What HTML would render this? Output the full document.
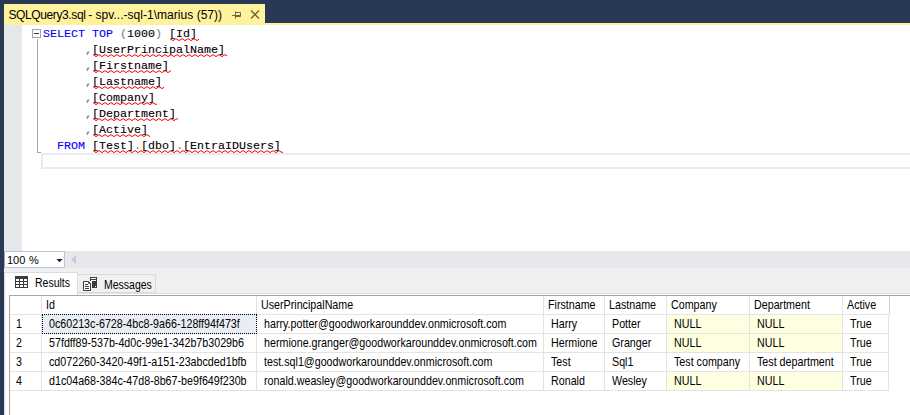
<!DOCTYPE html>
<html>
<head>
<meta charset="utf-8">
<title>SQLQuery3.sql</title>
<style>
*{margin:0;padding:0;box-sizing:border-box;}
html,body{width:910px;height:415px;overflow:hidden;background:#293955;}
body{position:relative;font-family:"Liberation Sans",sans-serif;color:#000;}
.abs{position:absolute;}
/* ---- document tab ---- */
#tab{left:4px;top:4px;width:261px;height:19px;background:#fff29d;}
#tabstrip{left:4px;top:23px;width:906px;height:2px;background:#fff29d;}
#tabtxt{left:3.5px;top:3px;font-size:12px;line-height:16px;white-space:nowrap;color:#000;}
/* ---- editor ---- */
#editor{left:4px;top:25px;width:906px;height:226px;background:#fff;}
#gutter{left:0;top:0;width:18px;height:226px;background:#e6e7e8;}
#code{left:39.0px;top:1px;font-family:"Liberation Mono",monospace;font-size:11.667px;letter-spacing:0;line-height:16px;white-space:pre;color:#000;-webkit-text-stroke:0.1px currentColor;}
#code div{height:16px;}
.k{color:#0000ff;}
.g{color:#808080;}
.gc{color:#808080;font-weight:bold;}
#curline{left:37px;top:128px;width:880px;height:16px;border:2px solid #eaeaf2;background:#fff;}
#ol-v{left:33px;top:14px;width:1px;height:114px;background:#a5a5a5;}
#ol-h{left:33px;top:127px;width:4px;height:1px;background:#a5a5a5;}
#ol-box{left:28px;top:4px;width:9px;height:9px;border:1px solid #a5a5a5;background:#fff;}
#ol-minus{left:30px;top:8px;width:5px;height:1px;background:#333;}
/* ---- zoom / scrollbar row ---- */
#hbar{left:4px;top:251px;width:906px;height:17px;background:#e8e8ec;}
#zoombox{left:0;top:0;width:61px;height:17px;background:#fff;border:1px solid #b8c4e0;border-left-color:#9aa6c8;}
#zoomtxt{left:2px;top:1px;font-size:11px;word-spacing:0.5px;line-height:15px;white-space:nowrap;}
/* ---- results area ---- */
#results{left:4px;top:268px;width:906px;height:147px;background:#f0f0f0;}
#rtab{left:0;top:4px;width:74px;height:23px;background:#fff;border:1px solid #dcdcdc;border-bottom:none;}
#mtab{left:74px;top:6px;width:78px;height:19px;background:#f0f0f0;border:1px solid #d9d9d9;border-left:none;}
.tl{font-size:12px;line-height:14px;white-space:nowrap;transform:scaleX(.875);transform-origin:0 50%;}
#pane{left:0;top:25px;width:906px;height:122px;background:#fff;border-top:1px solid #e0e0e0;border-left:1px solid #d8dce6;}
#grid{left:5px;top:27px;width:901px;height:120px;background:#fff;border-left:1px solid #a5a5a9;border-top:1px solid #a5a5a9;}
.vl{position:absolute;top:0;width:1px;background:#e3e3e3;}
.hl{position:absolute;left:0;height:1px;background:#e3e3e3;}
.c{position:absolute;height:18px;font-size:12.2px;line-height:18px;white-space:nowrap;}
.c span{display:inline-block;position:relative;top:-0.3px;transform:scaleX(.878);transform-origin:0 50%;}
.null{background:#ffffe1;}
.sel{position:absolute;background:#e9edf4;border:1px dotted #000;}
</style>
</head>
<body>
<div class="abs" id="tab"><div class="abs" id="tabtxt"><span class="abs" style="left:1px;top:0;letter-spacing:-0.39px">SQLQuery3.sql</span><span class="abs" style="left:80.7px;top:0;letter-spacing:0.03px">- spv...-sql-1\marius (57))</span></div>
<svg class="abs" style="left:228px;top:7px" width="9" height="8" viewBox="0 0 9 8"><path d="M0 4.5H3.5 M3.5 0.5V7.5 M3.5 1.5H8.5V5.5H3.5 M3.5 4.5H8.5" fill="none" stroke="#75633d" stroke-width="1"/></svg>
<svg class="abs" style="left:246px;top:6px" width="10" height="9" viewBox="0 0 10 9"><path d="M1 0.5L9 8.5M9 0.5L1 8.5" fill="none" stroke="#75633d" stroke-width="1.4"/></svg>
</div>
<div class="abs" id="tabstrip"></div>

<div class="abs" id="editor">
 <div class="abs" id="gutter"></div>
 <div class="abs" id="ol-v"></div><div class="abs" id="ol-h"></div>
 <div class="abs" id="ol-box"></div><div class="abs" id="ol-minus"></div>
 <div class="abs" id="curline"></div>
 <div class="abs" id="code"><div><span class="k">SELECT</span> <span class="k">TOP</span> <span class="g">(</span>1000<span class="g">)</span> [Id]</div><div>      <span class="gc">,</span>[UserPrincipalName]</div><div>      <span class="gc">,</span>[Firstname]</div><div>      <span class="gc">,</span>[Lastname]</div><div>      <span class="gc">,</span>[Company]</div><div>      <span class="gc">,</span>[Department]</div><div>      <span class="gc">,</span>[Active]</div><div>  <span class="k">FROM</span> [Test]<span class="g">.</span>[dbo]<span class="g">.</span>[EntraIDUsers]</div></div>
<svg class="abs" style="left:165.5px;top:13px" width="29" height="4" viewBox="0 0 29 4"><path d="M0 0.6 L3 2.6 L6 0.6 L9 2.6 L12 0.6 L15 2.6 L18 0.6 L21 2.6 L24 0.6 L27 2.6 L30 0.6" fill="none" stroke="#ff0000" stroke-width="1" stroke-linejoin="round"/></svg>
<svg class="abs" style="left:88.5px;top:29px" width="134" height="4" viewBox="0 0 134 4"><path d="M0 0.6 L3 2.6 L6 0.6 L9 2.6 L12 0.6 L15 2.6 L18 0.6 L21 2.6 L24 0.6 L27 2.6 L30 0.6 L33 2.6 L36 0.6 L39 2.6 L42 0.6 L45 2.6 L48 0.6 L51 2.6 L54 0.6 L57 2.6 L60 0.6 L63 2.6 L66 0.6 L69 2.6 L72 0.6 L75 2.6 L78 0.6 L81 2.6 L84 0.6 L87 2.6 L90 0.6 L93 2.6 L96 0.6 L99 2.6 L102 0.6 L105 2.6 L108 0.6 L111 2.6 L114 0.6 L117 2.6 L120 0.6 L123 2.6 L126 0.6 L129 2.6 L132 0.6 L135 2.6" fill="none" stroke="#ff0000" stroke-width="1" stroke-linejoin="round"/></svg>
<svg class="abs" style="left:88.5px;top:45px" width="78" height="4" viewBox="0 0 78 4"><path d="M0 0.6 L3 2.6 L6 0.6 L9 2.6 L12 0.6 L15 2.6 L18 0.6 L21 2.6 L24 0.6 L27 2.6 L30 0.6 L33 2.6 L36 0.6 L39 2.6 L42 0.6 L45 2.6 L48 0.6 L51 2.6 L54 0.6 L57 2.6 L60 0.6 L63 2.6 L66 0.6 L69 2.6 L72 0.6 L75 2.6 L78 0.6 L81 2.6" fill="none" stroke="#ff0000" stroke-width="1" stroke-linejoin="round"/></svg>
<svg class="abs" style="left:88.5px;top:61px" width="71" height="4" viewBox="0 0 71 4"><path d="M0 0.6 L3 2.6 L6 0.6 L9 2.6 L12 0.6 L15 2.6 L18 0.6 L21 2.6 L24 0.6 L27 2.6 L30 0.6 L33 2.6 L36 0.6 L39 2.6 L42 0.6 L45 2.6 L48 0.6 L51 2.6 L54 0.6 L57 2.6 L60 0.6 L63 2.6 L66 0.6 L69 2.6 L72 0.6" fill="none" stroke="#ff0000" stroke-width="1" stroke-linejoin="round"/></svg>
<svg class="abs" style="left:88.5px;top:77px" width="64" height="4" viewBox="0 0 64 4"><path d="M0 0.6 L3 2.6 L6 0.6 L9 2.6 L12 0.6 L15 2.6 L18 0.6 L21 2.6 L24 0.6 L27 2.6 L30 0.6 L33 2.6 L36 0.6 L39 2.6 L42 0.6 L45 2.6 L48 0.6 L51 2.6 L54 0.6 L57 2.6 L60 0.6 L63 2.6 L66 0.6" fill="none" stroke="#ff0000" stroke-width="1" stroke-linejoin="round"/></svg>
<svg class="abs" style="left:88.5px;top:93px" width="85" height="4" viewBox="0 0 85 4"><path d="M0 0.6 L3 2.6 L6 0.6 L9 2.6 L12 0.6 L15 2.6 L18 0.6 L21 2.6 L24 0.6 L27 2.6 L30 0.6 L33 2.6 L36 0.6 L39 2.6 L42 0.6 L45 2.6 L48 0.6 L51 2.6 L54 0.6 L57 2.6 L60 0.6 L63 2.6 L66 0.6 L69 2.6 L72 0.6 L75 2.6 L78 0.6 L81 2.6 L84 0.6 L87 2.6" fill="none" stroke="#ff0000" stroke-width="1" stroke-linejoin="round"/></svg>
<svg class="abs" style="left:88.5px;top:109px" width="57" height="4" viewBox="0 0 57 4"><path d="M0 0.6 L3 2.6 L6 0.6 L9 2.6 L12 0.6 L15 2.6 L18 0.6 L21 2.6 L24 0.6 L27 2.6 L30 0.6 L33 2.6 L36 0.6 L39 2.6 L42 0.6 L45 2.6 L48 0.6 L51 2.6 L54 0.6 L57 2.6 L60 0.6" fill="none" stroke="#ff0000" stroke-width="1" stroke-linejoin="round"/></svg>
<svg class="abs" style="left:88.5px;top:125px" width="190" height="4" viewBox="0 0 190 4"><path d="M0 0.6 L3 2.6 L6 0.6 L9 2.6 L12 0.6 L15 2.6 L18 0.6 L21 2.6 L24 0.6 L27 2.6 L30 0.6 L33 2.6 L36 0.6 L39 2.6 L42 0.6 L45 2.6 L48 0.6 L51 2.6 L54 0.6 L57 2.6 L60 0.6 L63 2.6 L66 0.6 L69 2.6 L72 0.6 L75 2.6 L78 0.6 L81 2.6 L84 0.6 L87 2.6 L90 0.6 L93 2.6 L96 0.6 L99 2.6 L102 0.6 L105 2.6 L108 0.6 L111 2.6 L114 0.6 L117 2.6 L120 0.6 L123 2.6 L126 0.6 L129 2.6 L132 0.6 L135 2.6 L138 0.6 L141 2.6 L144 0.6 L147 2.6 L150 0.6 L153 2.6 L156 0.6 L159 2.6 L162 0.6 L165 2.6 L168 0.6 L171 2.6 L174 0.6 L177 2.6 L180 0.6 L183 2.6 L186 0.6 L189 2.6 L192 0.6" fill="none" stroke="#ff0000" stroke-width="1" stroke-linejoin="round"/></svg>
</div>

<div class="abs" id="hbar">
 <div class="abs" id="zoombox"><div class="abs" id="zoomtxt">100 %</div>
  <svg class="abs" style="left:50.5px;top:7px" width="7" height="4" viewBox="0 0 7 4"><path d="M0.3 0H6.7L3.5 3.2Z" fill="#1b2035"/></svg>
 </div>
 <svg class="abs" style="left:67px;top:4px" width="5" height="9" viewBox="0 0 5 9"><path d="M5 0V9L0 4.5Z" fill="#c8c9d2"/></svg>
</div>

<div class="abs" id="results">
 <div class="abs" id="pane"></div>
 <div class="abs" id="rtab">
  <svg class="abs" style="left:10px;top:3px" width="13" height="12" viewBox="0 0 13 12"><rect x="0" y="0" width="13" height="12" fill="#3b3b3b"/><rect x="1" y="3" width="3" height="2" fill="#fff"/><rect x="5" y="3" width="3" height="2" fill="#fff"/><rect x="9" y="3" width="3" height="2" fill="#fff"/><rect x="1" y="6" width="3" height="2" fill="#fff"/><rect x="5" y="6" width="3" height="2" fill="#fff"/><rect x="9" y="6" width="3" height="2" fill="#fff"/><rect x="1" y="9" width="3" height="2" fill="#fff"/><rect x="5" y="9" width="3" height="2" fill="#fff"/><rect x="9" y="9" width="3" height="2" fill="#fff"/></svg>
  <div class="abs tl" style="left:30.2px;top:2.65px">Results</div>
 </div>
 <div class="abs" id="mtab">
  <svg class="abs" style="left:4px;top:2px" width="16" height="14" viewBox="0 0 16 14"><rect x="8" y="0" width="7" height="11" fill="#3b3b3b"/><rect x="9" y="1" width="5" height="1" fill="#fff"/><rect x="9" y="3" width="5" height="1" fill="#fff"/><rect x="13" y="9" width="1" height="1" fill="#fff"/><rect x="8" y="4" width="2" height="7" fill="#f4f4f4"/><path d="M1.5 4.5H6.5L8.5 6.5V13.5H1.5Z" fill="#fff" stroke="#3b3b3b"/><path d="M6.5 4.5V6.5H8.5" fill="none" stroke="#3b3b3b" stroke-width="0.8"/><path d="M3 7.5H6M3 9.5H7M3 11.5H7" stroke="#3b3b3b"/></svg>
  <div class="abs tl" style="left:25.6px;top:2.65px">Messages</div>
 </div>
 <div class="abs" id="grid">
<div class="vl" style="left:31px;height:95px"></div>
<div class="vl" style="left:246px;height:95px"></div>
<div class="vl" style="left:533px;height:95px"></div>
<div class="vl" style="left:594px;height:95px"></div>
<div class="vl" style="left:656px;height:95px"></div>
<div class="vl" style="left:739px;height:95px"></div>
<div class="vl" style="left:832px;height:95px"></div>
<div class="vl" style="left:879px;height:18px;background:#d0d0d0"></div>
<div class="vl" style="left:878px;top:18px;height:77px"></div>
<div class="hl" style="top:18px;width:879px"></div>
<div class="hl" style="top:37px;width:879px"></div>
<div class="hl" style="top:56px;width:879px"></div>
<div class="hl" style="top:75px;width:879px"></div>
<div class="hl" style="top:94px;width:879px"></div>
<div class="c" style="left:36px;top:0px"><span>Id</span></div>
<div class="c" style="left:251px;top:0px"><span>UserPrincipalName</span></div>
<div class="c" style="left:538px;top:0px"><span>Firstname</span></div>
<div class="c" style="left:599px;top:0px"><span>Lastname</span></div>
<div class="c" style="left:661px;top:0px"><span>Company</span></div>
<div class="c" style="left:744px;top:0px"><span>Department</span></div>
<div class="c" style="left:837px;top:0px"><span>Active</span></div>
<div class="c" style="left:6px;top:19px"><span>1</span></div>
<div class="sel" style="left:32px;top:18px;width:215px;height:20px"></div>
<div class="c" style="left:32px;top:19px;width:214px;padding-left:7.2px"><span>0c60213c-6728-4bc8-9a66-128ff94f473f</span></div>
<div class="c" style="left:247px;top:19px;width:286px;padding-left:6.5px"><span>harry.potter@goodworkarounddev.onmicrosoft.com</span></div>
<div class="c" style="left:534px;top:19px;width:60px;padding-left:6.5px"><span>Harry</span></div>
<div class="c" style="left:595px;top:19px;width:61px;padding-left:6.5px"><span>Potter</span></div>
<div class="c null" style="left:657px;top:19px;width:82px;padding-left:6.5px"><span>NULL</span></div>
<div class="c null" style="left:740px;top:19px;width:92px;padding-left:6.5px"><span>NULL</span></div>
<div class="c" style="left:833px;top:19px;width:46px;padding-left:6.5px"><span>True</span></div>
<div class="c" style="left:6px;top:38px"><span>2</span></div>
<div class="c" style="left:32px;top:38px;width:214px;padding-left:7.2px"><span>57fdff89-537b-4d0c-99e1-342b7b3029b6</span></div>
<div class="c" style="left:247px;top:38px;width:286px;padding-left:6.5px"><span>hermione.granger@goodworkarounddev.onmicrosoft.com</span></div>
<div class="c" style="left:534px;top:38px;width:60px;padding-left:6.5px"><span>Hermione</span></div>
<div class="c" style="left:595px;top:38px;width:61px;padding-left:6.5px"><span>Granger</span></div>
<div class="c null" style="left:657px;top:38px;width:82px;padding-left:6.5px"><span>NULL</span></div>
<div class="c null" style="left:740px;top:38px;width:92px;padding-left:6.5px"><span>NULL</span></div>
<div class="c" style="left:833px;top:38px;width:46px;padding-left:6.5px"><span>True</span></div>
<div class="c" style="left:6px;top:57px"><span>3</span></div>
<div class="c" style="left:32px;top:57px;width:214px;padding-left:7.2px"><span>cd072260-3420-49f1-a151-23abcded1bfb</span></div>
<div class="c" style="left:247px;top:57px;width:286px;padding-left:6.5px"><span>test.sql1@goodworkarounddev.onmicrosoft.com</span></div>
<div class="c" style="left:534px;top:57px;width:60px;padding-left:6.5px"><span>Test</span></div>
<div class="c" style="left:595px;top:57px;width:61px;padding-left:6.5px"><span>Sql1</span></div>
<div class="c" style="left:657px;top:57px;width:82px;padding-left:6.5px"><span>Test company</span></div>
<div class="c" style="left:740px;top:57px;width:92px;padding-left:6.5px"><span>Test department</span></div>
<div class="c" style="left:833px;top:57px;width:46px;padding-left:6.5px"><span>True</span></div>
<div class="c" style="left:6px;top:76px"><span>4</span></div>
<div class="c" style="left:32px;top:76px;width:214px;padding-left:7.2px"><span>d1c04a68-384c-47d8-8b67-be9f649f230b</span></div>
<div class="c" style="left:247px;top:76px;width:286px;padding-left:6.5px"><span>ronald.weasley@goodworkarounddev.onmicrosoft.com</span></div>
<div class="c" style="left:534px;top:76px;width:60px;padding-left:6.5px"><span>Ronald</span></div>
<div class="c" style="left:595px;top:76px;width:61px;padding-left:6.5px"><span>Wesley</span></div>
<div class="c null" style="left:657px;top:76px;width:82px;padding-left:6.5px"><span>NULL</span></div>
<div class="c null" style="left:740px;top:76px;width:92px;padding-left:6.5px"><span>NULL</span></div>
<div class="c" style="left:833px;top:76px;width:46px;padding-left:6.5px"><span>True</span></div>
</div>
</div>
</body>
</html>
